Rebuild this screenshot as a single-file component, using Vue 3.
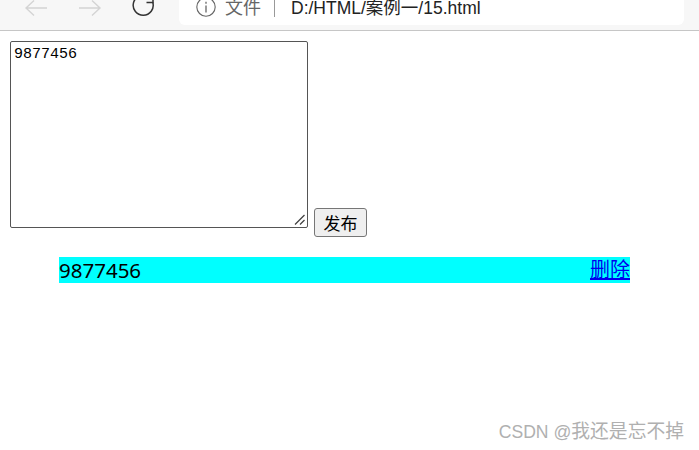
<script setup>
const text = '9877456'
</script>

<template>
  <div class="page">
    <header class="chrome">
      <div class="nav">
        <svg class="icon back" width="26" height="20" viewBox="0 0 26 20" fill="none"><path d="M24 8H3M11 0.500L3 8l8 7.500" stroke="#d4d4d4" stroke-width="1.4"/></svg>
        <svg class="icon forward" width="26" height="20" viewBox="0 0 26 20" fill="none"><path d="M2 8h21M15 0.500L23 8l-8 7.500" stroke="#d4d4d4" stroke-width="1.4"/></svg>
        <svg class="icon reload" width="24" height="20" viewBox="0 0 24 20" fill="none"><path d="M20.800 2.500A10 10 0 1 1 16 -3.500" stroke="#333" stroke-width="1.500"/><path d="M21 -3v5.500h-6.500" stroke="#333" stroke-width="1.500"/></svg>
      </div>
      <div class="address">
        <svg class="info" width="20" height="20" viewBox="0 0 20 20" fill="none"><circle cx="10" cy="7" r="9.200" stroke="#666" stroke-width="1.100"/><path d="M10 5.500v7M10 1.800v2" stroke="#666" stroke-width="1.300"/></svg>
        <span class="scheme">文件</span>
        <span class="divider"></span>
        <span class="url">D:/HTML/案例一/15.html</span>
      </div>
    </header>

    <main class="content">
      <div class="composer">
        <div class="field">
          <textarea class="input" :value="text" spellcheck="false"></textarea>
          <svg class="grip" width="11" height="11" viewBox="0 0 11 11" fill="none"><path d="M1 10.500L10.500 1M6 10.500L10.500 6" stroke="#444" stroke-width="1.300"/></svg>
        </div>
        <button class="publish" type="button">发布</button>
      </div>
      <ul class="list">
        <li class="row">
          <span class="item-text">{{ text }}</span>
          <a class="remove" href="#">删除</a>
        </li>
      </ul>
    </main>

    <div class="watermark"><span class="latin">CSDN @</span>我还是忘不掉</div>
  </div>
</template>

<style>
html, body { margin: 0; background: #fff; overflow: hidden; }
</style>

<style scoped>
.page {
  width: 699px;
  height: 450px;
  position: relative;
  overflow: hidden;
  font-family: "Liberation Sans", "Noto Sans CJK SC", sans-serif;
}
.chrome {
  height: 31px;
  box-sizing: border-box;
  background: #f7f7f7;
  border-bottom: 1px solid #c6c6c6;
  display: flex;
  align-items: flex-start;
}
.nav {
  width: 179px;
  flex: none;
  position: relative;
  height: 30px;
}
.icon { position: absolute; top: 0; }
.back { left: 23px; }
.forward { left: 77px; }
.reload { left: 132px; }
.address {
  flex: none;
  width: 505px;
  height: 25px;
  background: #fff;
  border-radius: 0 0 6px 6px;
  display: flex;
  align-items: flex-start;
  box-sizing: border-box;
  padding-left: 17px;
}
.info { flex: none; margin-right: 9px; }
.scheme { font-size: 18px; line-height: 16px; color: #666; width: 49px; flex: none; }
.divider { width: 1px; height: 17px; background: #999; flex: none; margin-right: 16px; }
.url { font-size: 17.5px; line-height: 16px; color: #222; white-space: nowrap; }
.content { padding: 10px 10px 0; margin-top: -1px; }
.composer {
  display: flex;
  align-items: flex-end;
  gap: 6px;
  height: 197px;
}
.field {
  position: relative;
  width: 298px;
  height: 187px;
  margin-bottom: 9px;
  flex: none;
}
.input {
  display: block;
  width: 298px;
  height: 187px;
  box-sizing: border-box;
  margin: 0;
  padding: 4px 3px 2px;
  border: 1px solid #555;
  border-radius: 2px;
  font-family: "Liberation Mono", "Noto Sans CJK SC", monospace;
  font-size: 15px;
  color: #000;
  background: #fff;
  outline: none;
  resize: none;
}
.grip {
  position: absolute;
  right: 3px;
  bottom: 3px;
}
.publish {
  width: 53px;
  height: 29px;
  box-sizing: border-box;
  padding: 0;
  font-family: "Noto Sans CJK SC", sans-serif;
  font-size: 17px;
  line-height: 1;
  color: #000;
  background: #efefef;
  border: 1px solid #767676;
  border-radius: 3px;
}
.list {
  list-style: none;
  margin: 20px 59px 0 49px;
  padding: 0;
}
.row {
  height: 26px;
  line-height: 26px;
  font-size: 20px;
  background: #0ff;
  color: #000;
  display: flex;
  justify-content: space-between;
  font-family: "Noto Sans", "Noto Sans CJK SC", sans-serif;
}
.item-text { font-size: 20.5px; }
.remove { font-size: 20px; color: #00e; text-decoration: underline; }
.watermark {
  position: absolute;
  right: 15px;
  top: 420px;
  font-size: 18.8px;
  line-height: 24px;
  color: #b0b0b0;
  white-space: nowrap;
}
.latin { font-size: 17.6px; }
</style>
